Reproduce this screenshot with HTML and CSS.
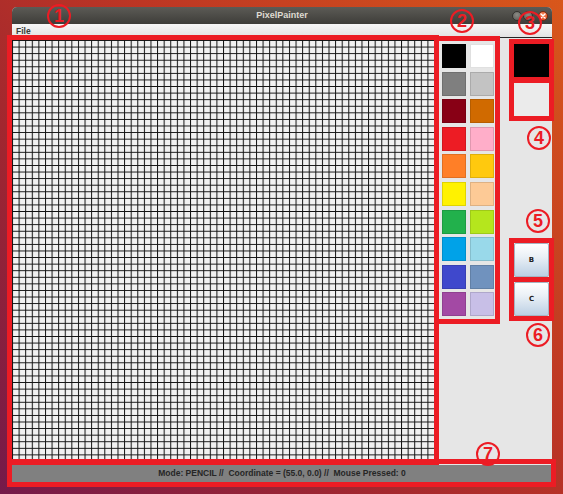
FILE: index.html
```html
<!DOCTYPE html>
<html>
<head>
<meta charset="utf-8">
<title>PixelPainter</title>
<link rel="stylesheet" href="styles.css">
</head>
<body>
<div class="window">
  <div class="titlebar">
    <div></div>
    <div class="title">PixelPainter</div>
    <div class="controls">
      <span class="ctl ctl-min"></span>
      <span class="ctl ctl-max"></span>
      <span class="ctl ctl-close">
        <svg width="10" height="10" viewBox="0 0 10 10"><path d="M3 3L7 7M7 3L3 7" stroke="#fff" stroke-width="1.4" stroke-linecap="round"/></svg>
      </span>
    </div>
  </div>
  <div class="menubar"><span class="menu-item">File</span></div>
  <div class="main">
    <svg class="canvas" width="422" height="421" viewBox="0 0 422 421">
      <defs>
        <pattern id="cell" width="6.594" height="6.578" patternUnits="userSpaceOnUse">
          <path d="M0 0.5H6.594M0.5 0V6.578" stroke="#111" stroke-width="1" fill="none"/>
        </pattern>
      </defs>
      <rect width="422" height="421" fill="#f1f1f1"/>
      <rect width="422" height="421" fill="url(#cell)"/>
    </svg>
    <div class="palette">
      <span class="sw c-black"></span><span class="sw c-white"></span>
      <span class="sw c-grey"></span><span class="sw c-lgrey"></span>
      <span class="sw c-dred"></span><span class="sw c-brown"></span>
      <span class="sw c-red"></span><span class="sw c-pink"></span>
      <span class="sw c-orange"></span><span class="sw c-gold"></span>
      <span class="sw c-yellow"></span><span class="sw c-peach"></span>
      <span class="sw c-green"></span><span class="sw c-lime"></span>
      <span class="sw c-cyan"></span><span class="sw c-lcyan"></span>
      <span class="sw c-indigo"></span><span class="sw c-steel"></span>
      <span class="sw c-purple"></span><span class="sw c-lav"></span>
    </div>
    <div class="side">
      <div class="current primary"></div>
      <div class="current secondary"></div>
      <button class="tool first">B</button>
      <button class="tool">C</button>
    </div>
  </div>
  <div class="status">Mode: PENCIL //  Coordinate = (55.0, 0.0) //  Mouse Pressed: 0</div>
</div>

<div class="annotations">
  <div class="frame f-canvas"></div>
  <div class="frame f-status"></div>
  <div class="frame f-palette"></div>
  <div class="frame f-split f-current"><div class="hole"></div><div class="bar bar6"></div><div class="hole"></div></div>
  <div class="frame f-split f-tools"><div class="hole"></div><div class="bar bar5"></div><div class="hole"></div></div>
  <span class="num n1">1</span>
  <span class="num n2">2</span>
  <span class="num n3">3</span>
  <span class="num n4">4</span>
  <span class="num n5">5</span>
  <span class="num n6">6</span>
  <span class="num n7">7</span>
</div>
</body>
</html>
```
FILE: styles.css
```css
html, body {
  margin: 0;
  padding: 0;
}
body {
  width: 563px;
  height: 494px;
  position: relative;
  overflow: hidden;
  font-family: "Liberation Sans", "DejaVu Sans", sans-serif;
  background: linear-gradient(45deg, #741a4a 0%, #a2272f 35%, #bd3624 60%, #d8571b 100%);
}

.window {
  position: absolute;
  left: 12px;
  top: 7px;
  width: 540px;
  height: 478px;
  background: #e6e6e6;
  border-radius: 5px 5px 0 0;
  overflow: hidden;
  display: flex;
  flex-direction: column;
}

.titlebar {
  height: 17px;
  flex: none;
  background: linear-gradient(#5c5b56, #3e3d39);
  display: grid;
  grid-template-columns: 1fr auto 1fr;
  align-items: center;
}
.title {
  color: #dfdbd2;
  font-weight: bold;
  font-size: 9px;
  line-height: 17px;
}
.controls {
  display: flex;
  justify-content: flex-end;
  align-items: center;
  padding-right: 4px;
  gap: 1px;
}
.ctl {
  width: 10px;
  height: 10px;
  border-radius: 50%;
  box-sizing: border-box;
  display: block;
}
.ctl-min, .ctl-max {
  background: radial-gradient(circle at 50% 35%, #8c8b86, #5a5954);
  border: 1px solid #33322f;
}
.ctl-max { margin-right: 4px; }
.ctl-close {
  background: radial-gradient(circle at 50% 35%, #f68a5c, #e0481c);
  border: 1px solid #7a2a10;
}
.ctl-close svg { display: block; margin: -1px; }

.menubar {
  height: 13px;
  flex: none;
  background: linear-gradient(#f7f7f7, #e3e3e3);
  border-bottom: 1px solid #262626;
  display: flex;
  align-items: center;
  padding-left: 4px;
}
.menu-item {
  font-size: 8.5px;
  font-weight: bold;
  color: #3a3a3a;
}

.main {
  flex: none;
  height: 425px;
  padding-top: 2px;
  display: flex;
  align-items: flex-start;
}
.canvas {
  display: block;
  flex: none;
}

.palette {
  margin-left: 8px;
  margin-top: 4px;
  display: grid;
  grid-template-columns: 24px 24px;
  grid-auto-rows: 24px;
  column-gap: 4px;
  row-gap: 3.6px;
}
.sw {
  display: block;
  box-shadow: inset 0 0 0 1px rgba(0, 0, 0, 0.12);
}
.c-black { background: #000000; }
.c-white { background: #ffffff; }
.c-grey { background: #7f7f7f; }
.c-lgrey { background: #c3c3c3; }
.c-dred { background: #880015; }
.c-brown { background: #d06a00; }
.c-red { background: #ed1c24; }
.c-pink { background: #ffaec9; }
.c-orange { background: #ff7f27; }
.c-gold { background: #ffc90e; }
.c-yellow { background: #fff200; }
.c-peach { background: #fdca96; }
.c-green { background: #22b14c; }
.c-lime { background: #b5e61d; }
.c-cyan { background: #00a2e8; }
.c-lcyan { background: #99d9ea; }
.c-indigo { background: #3f48cc; }
.c-steel { background: #7092be; }
.c-purple { background: #a349a4; }
.c-lav { background: #c8bfe7; }

.side {
  margin-left: 20px;
  margin-top: 4px;
  width: 35px;
  display: flex;
  flex-direction: column;
}
.current {
  height: 33px;
}
.primary { background: #000; }
.secondary { background: #ebebeb; margin-top: 6px; }
.tool {
  height: 34px;
  width: 35px;
  margin: 5px 0 0 0;
  padding: 0;
  border: 1px solid #a7b4c2;
  border-radius: 2px;
  background: linear-gradient(#ffffff, #eaf0f6 40%, #bcd0e4);
  font-family: "DejaVu Sans", sans-serif;
  font-size: 7px;
  font-weight: bold;
  color: #222;
}
.tool.first { margin-top: 127px; }

.status {
  height: 17px;
  flex: none;
  background: #808080;
  color: #262626;
  font-size: 8.5px;
  font-weight: bold;
  line-height: 17px;
  text-align: center;
  white-space: pre;
}

/* annotation overlays drawn on top of the screenshot */
.annotations {
  position: absolute;
  inset: 0;
  pointer-events: none;
}
.frame {
  position: absolute;
  box-sizing: border-box;
  border: 5px solid #ec1c24;
}
.f-canvas { left: 7px; top: 35px; width: 432px; height: 430px; }
.f-status { left: 7px; top: 459px; width: 549px; height: 28px; }
.f-palette { left: 434px; top: 36px; width: 66px; height: 288px; }
.f-split { display: flex; flex-direction: column; width: 45px; left: 509px; }
.f-current { top: 39px; height: 82px; }
.f-tools { top: 238px; height: 83px; }
.hole { flex: 1; }
.bar { background: #ec1c24; flex: none; }
.bar6 { height: 6px; }
.bar5 { height: 5px; }

.num {
  position: absolute;
  width: 20px;
  height: 20px;
  border: 2px solid #ec1c24;
  border-radius: 50%;
  color: #ec1c24;
  font-family: "Liberation Sans", sans-serif;
  font-weight: bold;
  font-size: 18px;
  line-height: 20px;
  text-align: center;
}
.n1 { left: 47px; top: 4px; }
.n2 { left: 450px; top: 9px; }
.n3 { left: 518px; top: 11px; }
.n4 { left: 527px; top: 126px; }
.n5 { left: 526px; top: 209px; }
.n6 { left: 526px; top: 323px; }
.n7 { left: 476px; top: 442px; }
```
